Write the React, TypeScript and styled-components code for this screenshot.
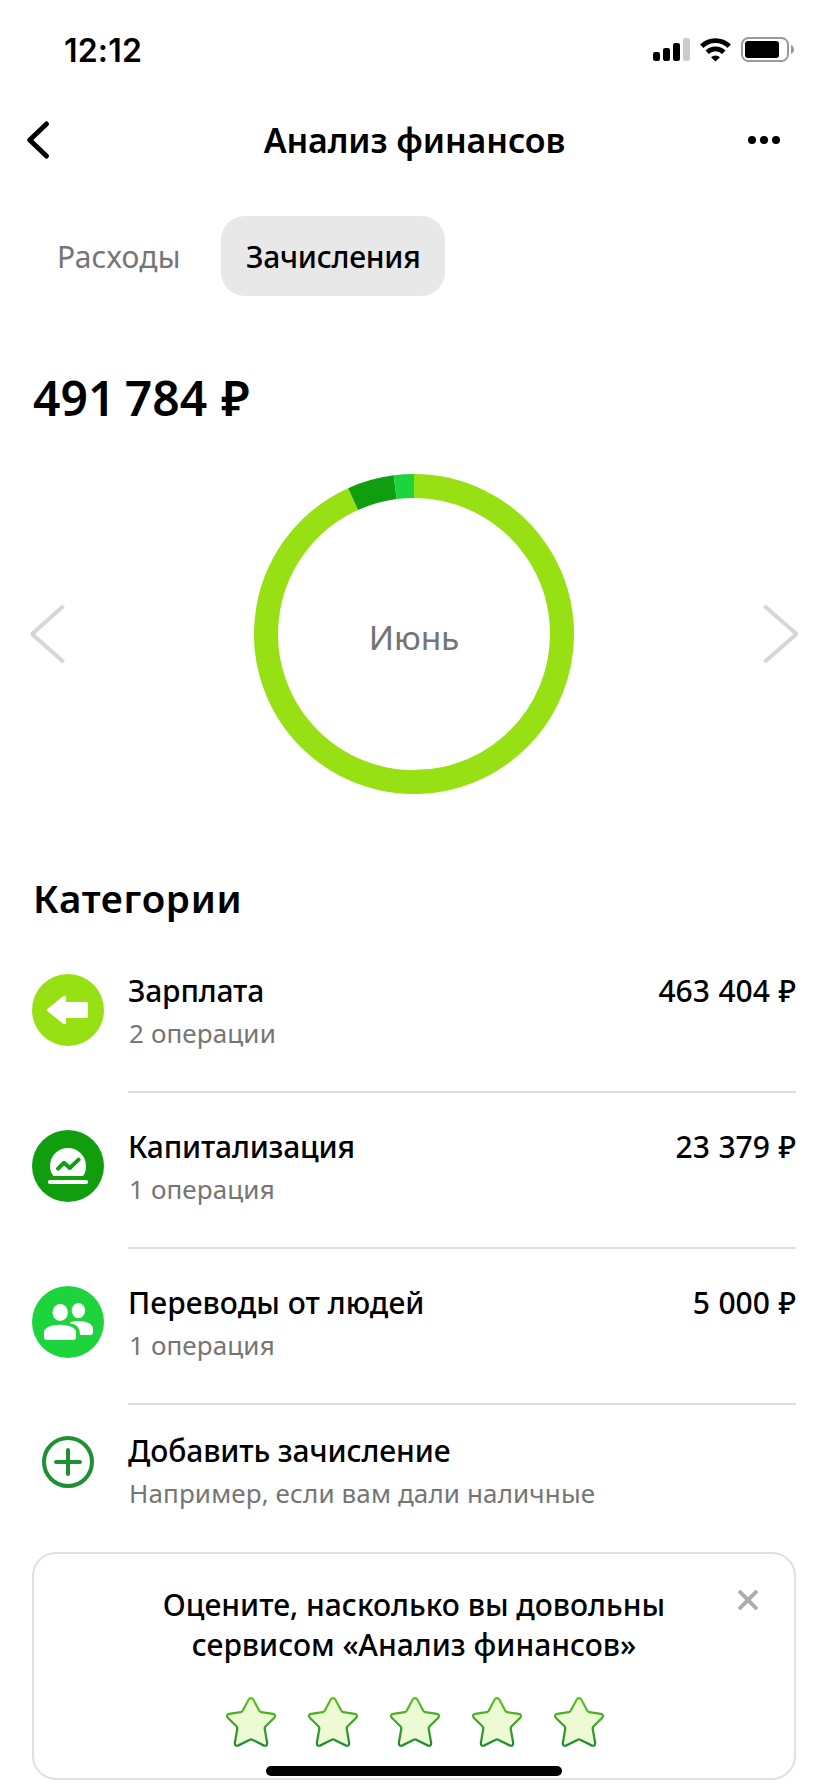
import React from "react";
import styled, { createGlobalStyle } from "styled-components";

const GlobalStyle = createGlobalStyle`
  * { box-sizing: border-box; }
  body { margin: 0; background: #fff; }
`;

const Screen = styled.div`
  position: relative;
  display: flex;
  flex-direction: column;
  width: 828px;
  height: 1792px;
  overflow: hidden;
  background: #fff;
  color: #000;
  font-family: "Noto Sans", "Open Sans", sans-serif;
  white-space: nowrap;
`;

const StatusBar = styled.div`
  display: flex;
  justify-content: space-between;
  align-items: center;
  height: 99px;
  padding: 0 32px 0 64px;
`;

const Clock = styled.span`
  padding-top: 2px;
  font: 600 32px/40px Inter, sans-serif;
  letter-spacing: 0.2px;
`;

const Header = styled.header`
  display: grid;
  grid-template-columns: 60px 1fr 60px;
  align-items: center;
  height: 82px;
  padding: 0 44px 0 24px;
`;

const HeaderTitle = styled.h1`
  margin: 0;
  padding: 0 0 0 21px;
  text-align: center;
  font-size: 34px;
  line-height: 44px;
  font-weight: 600;
  letter-spacing: -0.1px;
`;

const IconButton = styled.button<{ $align?: string }>`
  display: flex;
  justify-content: ${(p) => p.$align ?? "flex-start"};
  align-items: center;
  padding: 0;
  border: 0;
  background: none;
`;

const Tabs = styled.nav`
  display: flex;
  gap: 16px;
  margin-top: 35px;
  padding: 0 32px;
`;

const Tab = styled.button<{ $active?: boolean; $width: number }>`
  width: ${(p) => p.$width}px;
  height: 80px;
  padding: 2px 0 0 25px;
  border: 0;
  border-radius: 24px;
  text-align: left;
  font-family: inherit;
  font-size: 30px;
  line-height: 40px;
  font-weight: ${(p) => (p.$active ? 500 : 400)};
  letter-spacing: ${(p) => (p.$active ? -0.25 : 0.25)}px;
  color: ${(p) => (p.$active ? "#000" : "#757575")};
  background: ${(p) => (p.$active ? "#e8e8e8" : "transparent")};
`;

const Total = styled.div`
  display: flex;
  gap: 14px;
  margin: 72px 32px 0 33px;
  font-size: 48px;
  line-height: 60px;
  font-weight: 600;
  word-spacing: -3px;
`;

const ChartRow = styled.section`
  display: flex;
  justify-content: space-between;
  align-items: center;
  margin-top: 46px;
  padding: 0 30px;
`;

const Donut = styled.div`
  display: grid;
  place-items: center;
  width: 320px;
  height: 320px;
  > * { grid-area: 1 / 1; }
`;

const Month = styled.span`
  padding-top: 5px;
  font-size: 33.5px;
  line-height: 44px;
  letter-spacing: -0.1px;
  color: #757575;
`;

const SectionTitle = styled.h2`
  margin: 80px 32px 15px 33px;
  font-size: 38.5px;
  line-height: 48px;
  font-weight: 600;
  letter-spacing: 0.7px;
`;

const Row = styled.div`
  display: flex;
  gap: 24px;
  height: 156px;
  padding: 0 32px;
`;

const AddRow = styled(Row)`
  height: 147px;
`;

const Badge = styled.div<{ $color?: string; $top?: number }>`
  display: flex;
  justify-content: center;
  width: 72px;
  height: 72px;
  margin-top: ${(p) => p.$top ?? 37}px;
  border-radius: 50%;
  background: ${(p) => p.$color ?? "transparent"};
`;

const RowBody = styled.div<{ $top?: number; $line?: boolean }>`
  flex: 1;
  display: flex;
  justify-content: space-between;
  padding-top: ${(p) => p.$top ?? 34}px;
  border-bottom: ${(p) => (p.$line ? "2px solid #dedede" : "0")};
`;

const RowText = styled.div`
  display: flex;
  flex-direction: column;
  gap: 2px;
`;

const Name = styled.span<{ $spacing?: number }>`
  font-size: 30px;
  line-height: 40px;
  font-weight: 500;
  letter-spacing: ${(p) => p.$spacing ?? -0.1}px;
`;

const Note = styled.span`
  padding-left: 1px;
  font-size: 26px;
  line-height: 40px;
  color: #757575;
  letter-spacing: 0.13px;
`;

const Amount = styled(Name)`
  text-align: right;
  letter-spacing: 0;
  word-spacing: 0.7px;
`;

const RateCard = styled.section`
  position: relative;
  display: flex;
  flex-direction: column;
  align-items: center;
  height: 228px;
  margin: 0 32px;
  padding-top: 31px;
  border: 2px solid #e0e0e0;
  border-radius: 24px;
`;

const RateText = styled.p`
  margin: 0;
  text-align: center;
  font-size: 30px;
  line-height: 40px;
  font-weight: 500;
`;

const Stars = styled.div`
  display: flex;
  gap: 32px;
  margin: 32px 0 0 1px;
`;

const CloseButton = styled(IconButton)`
  position: absolute;
  top: 36px;
  right: 36px;
`;

const HomeIndicator = styled.div`
  position: absolute;
  left: 266px;
  bottom: 16px;
  width: 296px;
  height: 10px;
  border-radius: 5px;
  background: #000;
`;

const StatusIcons = () => (
  <svg width="143" height="26" viewBox="0 0 143 26">
    <rect x="0" y="15" width="7" height="9" rx="2.2" />
    <rect x="10" y="11" width="7" height="13" rx="2.2" />
    <rect x="20" y="6" width="7" height="18" rx="2.2" />
    <rect x="30" y="1" width="7" height="23" rx="2.2" fill="#ccc" />
    <g fill="none" stroke="#000" strokeWidth="4.8">
      <path d="M48.8 9.2a19.6 19.6 0 0 1 27.4 0" />
      <path d="M54.2 15.3a11.8 11.8 0 0 1 16.6 0" />
    </g>
    <path d="M58 20.2a6.6 6.6 0 0 1 9 0L62.5 24.6z" />
    <rect x="89" y="1" width="46" height="23" rx="6.5" fill="#fff" stroke="#999" strokeWidth="2" />
    <rect x="92" y="4" width="34" height="17" rx="3" />
    <path d="M138 8c4 1.500 4 7.500 0 9z" fill="#999" />
  </svg>
);

const Arrow = ({ flip }: { flip?: boolean }) => (
  <svg width="36" height="60" viewBox="0 0 36 60" fill="none" stroke="#d6d6d6" strokeWidth="4">
    <path d={flip ? "M2.500 2L34.500 30L2.500 58" : "M33.500 2L2 30L33.500 58"} strokeLinejoin="bevel" />
  </svg>
);

type Segment = { color: string; from: number; to: number };

const segments: Segment[] = [
  { color: "#97e013", from: 0, to: 335.7 },
  { color: "#109e0f", from: 335.7, to: 352.7 },
  { color: "#1ed43d", from: 352.7, to: 360 },
];

const point = (deg: number, r: number) => {
  const a = (deg * Math.PI) / 180;
  return `${160 + r * Math.sin(a)} ${160 - r * Math.cos(a)}`;
};

const Ring = () => (
  <svg width="320" height="320" viewBox="0 0 320 320" fill="none" strokeWidth="24">
    {segments.map((s) => (
      <path
        key={s.color}
        stroke={s.color}
        d={`M${point(s.from, 148)}A148 148 0 ${s.to - s.from > 180 ? 1 : 0} 1 ${point(s.to, 148)}`}
      />
    ))}
  </svg>
);

const SalaryIcon = () => (
  <svg width="72" height="72" viewBox="0 0 72 72" fill="#fff">
    <path d="M15.800 34.600L30.800 22.400C32.300 21.300 34 21.800 34 23.500V28H54.500Q56 28 56 29.500V42.500Q56 44 54.500 44H34V48.500C34 50.200 32.300 50.700 30.800 49.600L15.800 37.400Q14.200 36 15.800 34.600Z" />
  </svg>
);

const CapitalIcon = () => (
  <svg width="72" height="72" viewBox="0 0 72 72" fill="#fff">
    <path d="M21.500 46C19 43 18 40 18 36a18 18 0 0 1 36 0c0 4-.8 7-3 10z" />
    <rect x="16" y="50" width="40" height="4" rx="1.800" />
    <path d="M26 38.600L32 32.800L37.700 38L46.600 29.600" fill="none" stroke="#109e0f" strokeWidth="4" strokeLinecap="round" strokeLinejoin="round" />
  </svg>
);

const PeopleIcon = () => (
  <svg width="72" height="72" viewBox="0 0 72 72" fill="#fff">
    <ellipse cx="28.200" cy="26.500" rx="7.700" ry="8.500" />
    <ellipse cx="46.400" cy="24.600" rx="6.700" ry="7.700" />
    <path d="M12 46C12 42 19 38.800 28 38.800S44 42 44 46V51Q44 54 41 54H15Q12 54 12 51Z" />
    <path d="M38 36.200C40.500 35.300 43.500 35 46.500 35C54.500 35 61 38 61 42.500V46Q61 49 58 49H48C48.200 42 44.500 38 38 37.200Z" />
  </svg>
);

const PlusIcon = () => (
  <svg width="52" height="52" viewBox="0 0 52 52" fill="none" stroke="#1f9031" strokeWidth="4">
    <circle cx="26" cy="26" r="24" />
    <path d="M26 14V38M14 26H38" strokeLinecap="round" />
  </svg>
);

const Star = () => (
  <svg width="50" height="50" viewBox="0 0 50 50">
    <defs>
      <linearGradient id="star" x1="0" y1="0" x2="0" y2="1">
        <stop offset="0" stopColor="#5fc21c" />
        <stop offset="1" stopColor="#1f8a33" />
      </linearGradient>
    </defs>
    <path
      d="M22.800 2.300Q25 -.2 27.200 2.300L33.300 13.800Q34 15 35.300 15.200L46.800 16.800Q50.300 17.800 48.200 20.700L39.600 29.300Q38.500 30.400 38.700 31.800L41.200 46Q41.200 49.400 38 48.600L26.200 42.700Q25 42.100 23.800 42.700L12 48.600Q8.800 49.400 8.800 46L11.300 31.800Q11.500 30.400 10.400 29.300L1.800 20.700Q-.3 17.800 3.200 16.800L14.700 15.200Q16 15 16.700 13.800Z"
      fill="#edfbd5"
      stroke="url(#star)"
      strokeWidth="2.200"
    />
  </svg>
);

const categories = [
  { name: "Зарплата", spacing: -0.2, note: "2 операции", amount: "463 404 ₽", color: "#97e013", Icon: SalaryIcon },
  { name: "Капитализация", spacing: -0.2, note: "1 операция", amount: "23 379 ₽", color: "#109e0f", Icon: CapitalIcon },
  { name: "Переводы от людей", spacing: 0.05, note: "1 операция", amount: "5 000 ₽", color: "#1ed43d", Icon: PeopleIcon },
];

export default function App() {
  return (
    <>
      <GlobalStyle />
      <Screen>
        <StatusBar>
          <Clock>12:12</Clock>
          <StatusIcons />
        </StatusBar>
        <Header>
          <IconButton aria-label="Назад">
            <svg width="28" height="40" viewBox="0 0 28 40" fill="none" stroke="#000" strokeWidth="5" strokeLinecap="round" strokeLinejoin="round">
              <path d="M22.500 4L5.700 20L22.500 36" />
            </svg>
          </IconButton>
          <HeaderTitle>Анализ финансов</HeaderTitle>
          <IconButton aria-label="Ещё" $align="flex-end">
            <svg width="36" height="10" viewBox="0 0 36 10">
              <circle cx="4" cy="5" r="4" />
              <circle cx="16" cy="5" r="4" />
              <circle cx="28" cy="5" r="4" />
            </svg>
          </IconButton>
        </Header>
        <Tabs>
          <Tab $width={173}>Расходы</Tab>
          <Tab $width={224} $active>Зачисления</Tab>
        </Tabs>
        <Total>
          <span>491 784</span>
          <span>₽</span>
        </Total>
        <ChartRow>
          <Arrow />
          <Donut>
            <Ring />
            <Month>Июнь</Month>
          </Donut>
          <Arrow flip />
        </ChartRow>
        <SectionTitle>Категории</SectionTitle>
        {categories.map(({ name, spacing, note, amount, color, Icon }) => (
          <Row key={name}>
            <Badge $color={color}><Icon /></Badge>
            <RowBody $line>
              <RowText>
                <Name $spacing={spacing}>{name}</Name>
                <Note>{note}</Note>
              </RowText>
              <Amount>{amount}</Amount>
            </RowBody>
          </Row>
        ))}
        <AddRow>
          <Badge $top={31}><PlusIcon /></Badge>
          <RowBody $top={26}>
            <RowText>
              <Name>Добавить зачисление</Name>
              <Note>Например, если вам дали наличные</Note>
            </RowText>
          </RowBody>
        </AddRow>
        <RateCard>
          <RateText>Оцените, насколько вы довольны<br />сервисом «Анализ финансов»</RateText>
          <Stars>
            {[1, 2, 3, 4, 5].map((n) => <Star key={n} />)}
          </Stars>
          <CloseButton aria-label="Закрыть">
            <svg width="20" height="20" viewBox="0 0 20 20" stroke="#adadad" strokeWidth="4" strokeLinecap="round">
              <path d="M2.200 2.200L17.800 17.800M17.800 2.200L2.200 17.800" />
            </svg>
          </CloseButton>
        </RateCard>
        <HomeIndicator />
      </Screen>
    </>
  );
}
